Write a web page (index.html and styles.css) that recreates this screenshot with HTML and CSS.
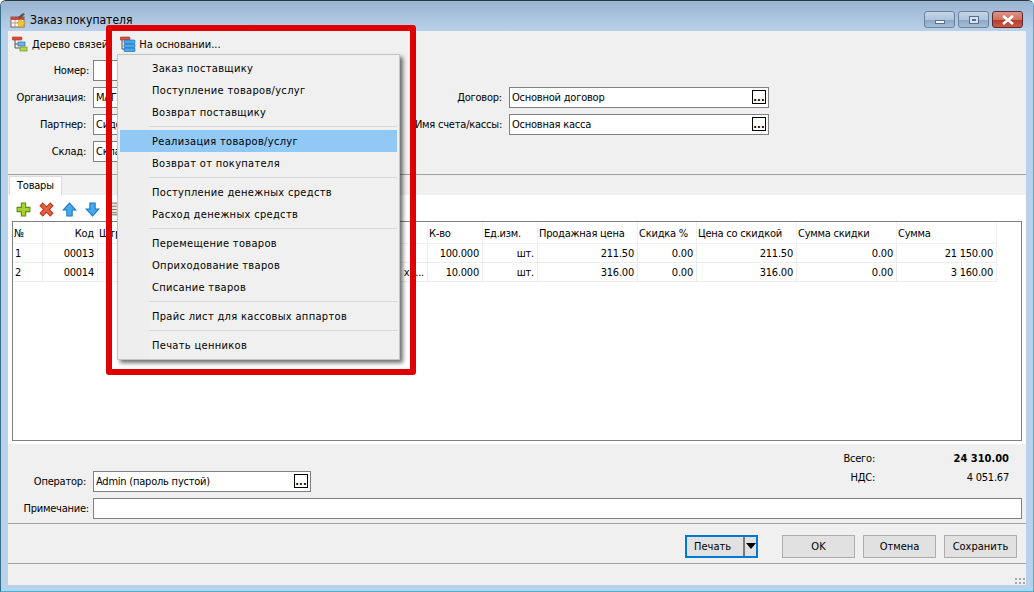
FILE: index.html
```html
<!DOCTYPE html>
<html lang="ru">
<head>
<meta charset="utf-8">
<title>Заказ покупателя</title>
<link rel="stylesheet" href="styles.css">
</head>
<body>
<div class="window">
  <header class="titlebar">
    <svg class="ico16" viewBox="0 0 16 16"><rect x="1" y="5" width="13" height="10" fill="#fff" stroke="#8a5a50"/><rect x="1" y="5" width="13" height="3" fill="#c8483c"/><path d="M1 11h13M5 8v7M9 8v7" stroke="#b09a94"/><path d="M8 5l5-4 2 1-5 5z" fill="#555"/><path d="M11 7l1.400 2.800 3 .4-2.200 2 .6 3-2.800-1.500-2.800 1.500.6-3-2.200-2 3-.4z" fill="#f7c81e" stroke="#c89a10" stroke-width=".5"/></svg>
    <span class="title">Заказ покупателя</span>
    <div class="caption">
      <span class="capbtn"><i class="cap-min"></i></span>
      <span class="capbtn"><i class="cap-max"></i></span>
      <span class="capbtn capclose"><svg viewBox="0 0 14 10" width="14" height="10"><path d="M2 1l10 8M12 1L2 9" stroke="#fff" stroke-width="2.600"/></svg></span>
    </div>
  </header>

  <main class="client">
    <div class="toolbar">
      <span class="tool tool-tree">
        <svg class="ico16" viewBox="0 0 16 16"><rect x="0" y="1" width="10" height="3" rx="1" fill="#e0503c" stroke="#a82818" stroke-width=".6"/><path d="M3 4v8h5M3 8h3" stroke="#555" fill="none"/><rect x="6" y="6" width="7" height="4" fill="#6fb4e8" stroke="#2c6ea8" stroke-width=".7"/><rect x="8" y="11" width="7" height="4" fill="#b6d84a" stroke="#6c9018" stroke-width=".7"/></svg>
        Дерево связей
      </span>
      <span class="tool tool-base">
        <svg class="ico16" viewBox="0 0 16 16"><rect x="0" y="1" width="10" height="3" rx="1" fill="#e0503c" stroke="#a82818" stroke-width=".6"/><path d="M2 4v9h2" stroke="#555" fill="none"/><rect x="4" y="4" width="11" height="3.600" rx="1" fill="#48a8ec" stroke="#1c6cb0" stroke-width=".7"/><rect x="4" y="8" width="11" height="3.600" rx="1" fill="#48a8ec" stroke="#1c6cb0" stroke-width=".7"/><rect x="4" y="12" width="11" height="3.600" rx="1" fill="#48a8ec" stroke="#1c6cb0" stroke-width=".7"/></svg>
        На основании...
      </span>
    </div>

    <section class="form">
      <div class="form-col form-left">
        <div class="row"><label class="lbl lbl-wide">Номер:</label><span class="field field-left"></span></div>
        <div class="row"><label class="lbl">Организация:</label><span class="field field-left">МАГАЗИН</span></div>
        <div class="row"><label class="lbl">Партнер:</label><span class="field field-left">Сидоров</span></div>
        <div class="row"><label class="lbl">Склад:</label><span class="field field-left">Склад</span></div>
      </div>
      <div class="form-col form-right">
        <div class="row"><label class="lbl lbl-right">Договор:</label><span class="field field-right">Основной договор<b class="dots">...</b></span></div>
        <div class="row"><label class="lbl lbl-right">Имя счета/кассы:</label><span class="field field-right">Основная касса<b class="dots">...</b></span></div>
      </div>
    </section>

    <nav class="tabs"><span class="tab">Товары</span></nav>

    <section class="page">
      <div class="gridbar">
        <svg class="ico14" viewBox="0 0 14 14"><path d="M5 1h4v4h4v4H9v4H5V9H1V5h4z" fill="#a8d030" stroke="#5e8c10"/></svg>
        <svg class="ico14" viewBox="0 0 14 14"><path d="M3.500 1L7 4.500 10.500 1 13 3.500 9.500 7 13 10.500 10.500 13 7 9.500 3.500 13 1 10.500 4.500 7 1 3.500z" fill="#e8603c" stroke="#b83c20"/></svg>
        <svg class="ico14" viewBox="0 0 14 14"><path d="M7 1l6 6.500H9.500V13h-5V7.500H1z" fill="#48a8ec" stroke="#1c78c0"/></svg>
        <svg class="ico14" viewBox="0 0 14 14"><path d="M7 13L1 6.500h3.500V1h5v5.500H13z" fill="#48a8ec" stroke="#1c78c0"/></svg>
        <svg class="ico14" viewBox="0 0 14 14"><rect x="1" y="1" width="9" height="11" fill="#e8e8dc" stroke="#807a68"/><path d="M3 4h5M3 7h5M3 10h5" stroke="#807a68"/></svg>
      </div>
      <div class="grid">
        <table class="tbl">
          <colgroup><col class="c-n"><col class="c-code"><col class="c-bar"><col class="c-name"><col class="c-qty"><col class="c-unit"><col class="c-price"><col class="c-disc"><col class="c-dprice"><col class="c-dsum"><col class="c-sum"></colgroup>
          <tr class="head"><td>№</td><td class="r">Код</td><td>Штрихкод</td><td>Наименование</td><td>К-во</td><td>Ед.изм.</td><td>Продажная цена</td><td>Скидка %</td><td>Цена со скидкой</td><td>Сумма скидки</td><td>Сумма</td></tr>
          <tr><td>1</td><td class="r">00013</td><td></td><td></td><td class="r">100.000</td><td class="r">шт.</td><td class="r">211.50</td><td class="r">0.00</td><td class="r">211.50</td><td class="r">0.00</td><td class="r">21 150.00</td></tr>
          <tr><td>2</td><td class="r">00014</td><td></td><td class="r">х.....</td><td class="r">10.000</td><td class="r">шт.</td><td class="r">316.00</td><td class="r">0.00</td><td class="r">316.00</td><td class="r">0.00</td><td class="r">3 160.00</td></tr>
        </table>
      </div>
    </section>

    <section class="bottom">
      <div class="bottom-top">
        <div class="row row-op"><label class="lbl">Оператор:</label><span class="field field-op">Admin (пароль пустой)<b class="dots">...</b></span></div>
        <div class="totals">
          <div class="total"><span class="t-label">Всего:</span><b class="t-value t-bold">24 310.00</b></div>
          <div class="total"><span class="t-label">НДС:</span><span class="t-value">4 051.67</span></div>
        </div>
      </div>
      <div class="row"><label class="lbl lbl-wide">Примечание:</label><span class="field field-note"></span></div>
    </section>

    <footer class="actions">
      <span class="btn btn-print"><span class="print-text">Печать</span><span class="print-arrow"></span></span>
      <span class="btn btn-ok">OK</span>
      <span class="btn">Отмена</span>
      <span class="btn">Сохранить</span>
    </footer>

    <div class="status"><span class="grip"><i></i><i></i><i></i><i></i><i></i><i></i></span></div>
  </main>

  <div class="menu">
    <div class="mi">Заказ поставщику</div>
    <div class="mi">Поступление товаров/услуг</div>
    <div class="mi">Возврат поставщику</div>
    <div class="sep"></div>
    <div class="mi active">Реализация товаров/услуг</div>
    <div class="mi">Возврат от покупателя</div>
    <div class="sep"></div>
    <div class="mi">Поступление денежных средств</div>
    <div class="mi">Расход денежных средств</div>
    <div class="sep"></div>
    <div class="mi">Перемещение товаров</div>
    <div class="mi">Оприходование тваров</div>
    <div class="mi">Списание тваров</div>
    <div class="sep"></div>
    <div class="mi">Прайс лист для кассовых аппартов</div>
    <div class="sep"></div>
    <div class="mi">Печать ценников</div>
  </div>
  <div class="redbox"></div>
</div>
</body>
</html>
```
FILE: styles.css
```css
* { box-sizing: border-box; }
html, body { margin: 0; padding: 0; background: #fff; }
body {
  width: 1034px; height: 592px; overflow: hidden;
  font-family: "DejaVu Sans", sans-serif; font-stretch: condensed; font-size: 11px; color: #000;
  letter-spacing: -.22px;
}
.window {
  position: relative; width: 1034px; height: 592px;
  display: flex; flex-direction: column;
  background: #b9d1ea;
  border: 1px solid #2dbbdc; border-top-color: #2b3540; border-left-color: #35708a;
  border-radius: 6px 6px 0 0;
  padding: 0 7px 6px;
}
.titlebar {
  height: 30px; margin: 0 -7px; padding: 0 7px 0 9px; flex: none;
  display: flex; align-items: center; gap: 4px;
  background: linear-gradient(#99b4d1, #b9d1ea);
  border-radius: 5px 5px 0 0;
}
.title { font-size: 12px; color: #000; margin-top: 7px; letter-spacing: 0; }
.ico16 { width: 16px; height: 16px; flex: none; }
.ico14 { width: 15px; height: 15px; flex: none; }
.titlebar .ico16 { margin-top: 7px; }
.caption { margin-left: auto; display: flex; gap: 3px; align-self: flex-start; margin-top: 10px; margin-right: 3px; }
.capbtn {
  width: 31px; height: 17px; border: 1px solid #6f8199; border-radius: 3px;
  background: linear-gradient(#c3d4e7 0, #b0c6dd 50%, #8aa7c6 52%, #a5bdd7 100%);
  display: flex; align-items: center; justify-content: center;
}
.capclose { border-color: #5a2a30; width: 31px; background: linear-gradient(#dc9488 0, #d0705f 50%, #b83828 52%, #c85a48 100%); }
.cap-min { width: 10px; height: 4px; margin-top: 4px; background: #f0f4f8; border: 1px solid #58708c; }
.cap-max { width: 10px; height: 8px; border: 1px solid #58708c; background: #d5e2ef; box-shadow: inset 0 0 0 2px #d5e2ef, inset 0 0 0 3px #58708c; }

.client { flex: 1; display: flex; flex-direction: column; background: #f0f0f0; min-height: 0; }
.toolbar { height: 26px; display: flex; align-items: center; flex: none; letter-spacing: 0; }
.tool { display: flex; align-items: center; gap: 3px; }
.tool-tree { margin-left: 4px; gap: 4px; }
.tool-base { margin-left: 12px; }

.form { height: 118px; flex: none; border-bottom: 1px solid #a0a0a0; display: flex; padding-top: 3px; }
.form-col { display: flex; flex-direction: column; gap: 6px; }
.form-left { width: 400px; }
.form-right { padding-top: 27px; }
.row { display: flex; align-items: center; height: 21px; }
.lbl { width: 78px; text-align: right; flex: none; }
.lbl-wide { width: 81px; }
.lbl-right { width: 94px; }
.lbl + .field { margin-left: 7px; }
.lbl-wide + .field { margin-left: 4px; }
.field {
  position: relative; display: block; height: 21px; line-height: 19px; padding-left: 2px;
  background: #fff; border: 1px solid #808080; white-space: nowrap;
}
.field-left { width: 300px; }
.field-right { width: 260px; }
.field-op { width: 218px; }
.field-note { width: 929px; }
.dots {
  position: absolute; right: 2px; top: 2px; width: 14px; height: 14px;
  border: 1px solid #000; background: #fff; font-size: 11px; line-height: 14px; text-align: center; font-weight: 700; letter-spacing: 0;
}

.tabs { height: 20px; flex: none; padding-top: 1px; }
.tab { display: block; width: 53px; height: 20px; line-height: 18px; padding-left: 7px; margin-left: 1px; background: #fff; border: 1px solid #dcdcdc; border-bottom: 0; }

.page { height: 249px; flex: none; background: #fff; padding: 0 4px 3px; display: flex; flex-direction: column; }
.gridbar { height: 26px; flex: none; display: flex; align-items: center; gap: 8px; padding-left: 4px; padding-top: 3px; }
.grid { flex: 1; border: 1px solid #808080; background: #fff; overflow: hidden; }
.tbl { border-collapse: separate; border-spacing: 0; table-layout: fixed; width: 984px; }
.c-n { width: 30px; } .c-code { width: 55px; } .c-bar { width: 100px; } .c-name { width: 230px; }
.c-qty { width: 55px; } .c-unit { width: 55px; } .c-price { width: 100px; } .c-disc { width: 59px; }
.c-dprice { width: 100px; } .c-dsum { width: 100px; } .c-sum { width: 100px; }
.tbl td {
  height: 19px; padding: 0 3px 0 2px; white-space: nowrap; overflow: hidden;
  border-right: 1px solid #ececec; border-bottom: 1px solid #ececec;
}
.tbl .head td { height: 22px; border-color: #f0f0f0; padding-top: 2px; padding-left: 1px; }
.tbl .r { text-align: right; }

.bottom { height: 80px; flex: none; border-bottom: 1px solid #a0a0a0; display: flex; flex-direction: column; }
.bottom-top { height: 54px; display: flex; position: relative; }
.row-op { margin-top: 27px; }
.totals { margin-left: auto; margin-top: 5px; margin-right: 17px; display: flex; flex-direction: column; }
.total { display: flex; height: 19px; align-items: center; justify-content: flex-end; }
.t-label { width: 40px; text-align: right; }
.t-value { width: 134px; text-align: right; }
.t-bold { letter-spacing: 0; }

.actions { height: 40px; flex: none; border-bottom: 1px solid #a0a0a0; display: flex; justify-content: flex-end; gap: 8px; padding: 11px 9px 0 0; letter-spacing: 0; }
.btn { width: 73px; height: 23px; background: #e1e1e1; border: 1px solid #adadad; display: flex; align-items: center; justify-content: center; }
.btn-print { width: 73px; margin-right: 16px; border: 2px solid #0078d7; justify-content: flex-start; padding-left: 7px; }
.print-text { flex: 1; }
.print-arrow { height: 100%; width: 13px; border-left: 2px solid #7a7a7a; position: relative; }
.print-arrow::after { content: ""; position: absolute; left: 1px; top: 6px; border: 5px solid transparent; border-top: 6px solid #000; border-bottom: 0; }

.status { flex: 1; position: relative; }
.grip { position: absolute; right: 1px; bottom: 1px; width: 11px; display: flex; flex-wrap: wrap-reverse; justify-content: flex-end; gap: 2px; }
.grip i { width: 2px; height: 2px; background: #a8a8a8; }

.menu {
  position: absolute; left: 116px; top: 53px; width: 283px; height: 306px;
  background: linear-gradient(90deg, #eeeeee 0, #eeeeee 31px, #f0f0f0 31px);
  border: 1px solid #c4c4c4; box-shadow: 3px 3px 4px rgba(0,0,0,.55);
  padding: 2px 2px;
  letter-spacing: .32px;
}
.mi { height: 22px; line-height: 24px; padding-left: 32px; }
.mi.active { background: #90c8f6; }
.sep { position: relative; height: 7px; margin-left: 29px; }
.sep::after { content: ""; position: absolute; left: 0; right: 0; top: 3px; height: 1px; background: #d7d7d7; }
.redbox {
  position: absolute; left: 105px; top: 24px; width: 310px; height: 350px;
  border: 6px solid #e00000; border-radius: 3px; pointer-events: none;
}
```
